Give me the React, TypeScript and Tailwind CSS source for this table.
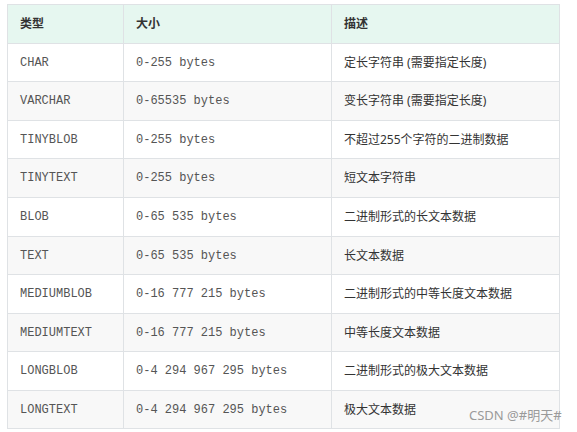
import React from "react";

const rows: [string, string, string, boolean][] = [
  ["CHAR", "0-255 bytes", "定长字符串 (需要指定长度)", false],
  ["VARCHAR", "0-65535 bytes", "变长字符串 (需要指定长度)", true],
  ["TINYBLOB", "0-255 bytes", "不超过255个字符的二进制数据", false],
  ["TINYTEXT", "0-255 bytes", "短文本字符串", true],
  ["BLOB", "0-65 535 bytes", "二进制形式的长文本数据", true],
  ["TEXT", "0-65 535 bytes", "长文本数据", false],
  ["MEDIUMBLOB", "0-16 777 215 bytes", "二进制形式的中等长度文本数据", true],
  ["MEDIUMTEXT", "0-16 777 215 bytes", "中等长度文本数据", false],
  ["LONGBLOB", "0-4 294 967 295 bytes", "二进制形式的极大文本数据", true],
  ["LONGTEXT", "0-4 294 967 295 bytes", "极大文本数据", false],
];

export default function App() {
  return (
    <div className="relative w-[577px] h-[432px] bg-white overflow-hidden pt-[4px] pl-[7px] font-['Noto_Sans','Noto_Sans_CJK_SC',sans-serif]">
      <div className="w-[553px] border-l border-t border-r border-[#dfe2e5]">
        <div className="flex h-[39px] bg-[#e6f7f0] border-b border-[#dfe2e5] text-[12px] font-bold text-[#333]">
          <div className="w-[116px] flex items-center pl-[12px] border-r border-[#dfe2e5]">类型</div>
          <div className="w-[208px] flex items-center pl-[12px] border-r border-[#dfe2e5]">大小</div>
          <div className="flex-1 flex items-center pl-[12px]">描述</div>
        </div>
        {rows.map(([t, s, d, tall], i) => (
          <div
            key={t}
            className={`flex border-b border-[#dfe2e5] ${tall ? "h-[39px]" : "h-[38px]"} ${i % 2 === 1 ? "bg-[#f8f8f8]" : "bg-white"}`}
          >
            <div className="w-[116px] flex items-center pl-[12px] border-r border-[#dfe2e5] text-[12px] text-[#555] font-['Liberation_Mono',monospace]">{t}</div>
            <div className="w-[208px] flex items-center pl-[12px] border-r border-[#dfe2e5] text-[12px] text-[#555] font-['Liberation_Mono',monospace]">{s}</div>
            <div className="flex-1 flex items-center pl-[12px] text-[12px] text-[#333]">{d}</div>
          </div>
        ))}
      </div>
      <div className="absolute left-[469px] top-[406px] text-[13px] text-[#9a9a9a]">CSDN @#明天#</div>
    </div>
  );
}
